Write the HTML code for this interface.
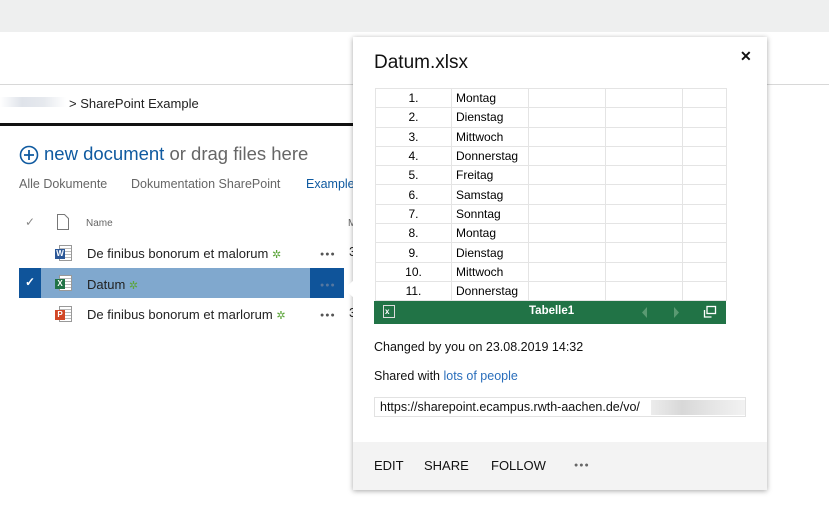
<!DOCTYPE html>
<html><head><meta charset="utf-8"><style>
*{margin:0;padding:0;box-sizing:border-box}
body{width:829px;height:529px;position:relative;overflow:hidden;background:#fff;font-family:"Liberation Sans",Arial,sans-serif;color:#222}
.a{position:absolute;white-space:nowrap}
.ic{position:absolute;width:13px;height:16px;border:1px solid #999;background:repeating-linear-gradient(180deg,#fff 0 2px,#bbb 2px 3px)}
.ic b{position:absolute;left:-5px;top:3px;width:10px;height:10px;color:#fff;font-size:8px;font-weight:bold;text-align:center;line-height:10px}
.star{color:#5ca53b;font-size:11px}
.dots{color:#555;font-size:7px;letter-spacing:1px}
table{border-collapse:collapse;position:absolute;left:375px;top:88px;font-family:"Liberation Sans",sans-serif;font-size:12px;color:#000}
td{border:1px solid #e4e4e4;height:19.3px;padding:0 4px}
</style></head><body>
<div class="a" style="left:0;top:0;width:829px;height:32px;background:#eeefef"></div>
<div class="a" style="left:0;top:84px;width:829px;height:1px;background:#d8d8d8"></div>
<div class="a" style="left:0;top:97px;width:66px;height:10px;background:linear-gradient(90deg,#fff,#dfe3ea,#e6e9ee,#fff)"></div>
<div class="a" style="left:69px;top:96px;font-size:13px;color:#222">&gt; SharePoint Example</div>
<div class="a" style="left:0;top:123px;width:353px;height:3px;background:#111"></div>
<svg class="a" style="left:19px;top:145px" width="20" height="20"><circle cx="10" cy="10" r="8.5" fill="none" stroke="#0f5aa0" stroke-width="1.6"/><path d="M10 5v10M5 10h10" stroke="#0f5aa0" stroke-width="1.8"/></svg>
<div class="a" style="left:44px;top:143px;font-size:18.5px;color:#0f5aa0">new document <span style="color:#666">or drag files here</span></div>
<div class="a" style="left:19px;top:177px;font-size:12.5px;color:#666">Alle Dokumente</div>
<div class="a" style="left:131px;top:177px;font-size:12.5px;color:#666">Dokumentation SharePoint</div>
<div class="a" style="left:306px;top:177px;font-size:12.5px;color:#0f5aa0">Example</div>
<div class="a" style="left:25px;top:215px;font-size:12px;color:#888">✓</div>
<svg class="a" style="left:57px;top:214px" width="12" height="16"><path d="M0.5 0.5h7l4 4v11h-11z" fill="none" stroke="#777"/></svg>
<div class="a" style="left:86px;top:218px;font-size:10px;color:#666">Name</div>
<div class="a" style="left:348px;top:218px;font-size:10px;color:#666">M</div>

<div class="ic" style="left:59px;top:245px"><b style="background:#2b5797">W</b></div>
<div class="a" style="left:87px;top:246px;font-size:13px">De finibus bonorum et malorum <span class="star">✲</span></div>
<div class="a dots" style="left:320px;top:251px">●●●</div>
<div class="a" style="left:349px;top:244px;font-size:13px">3</div>

<div class="a" style="left:19px;top:268px;width:22px;height:30px;background:#0f549a"></div>
<div class="a" style="left:41px;top:268px;width:269px;height:30px;background:#80a8ce"></div>
<div class="a" style="left:310px;top:268px;width:34px;height:30px;background:#0f549a"></div>
<div class="a" style="left:25px;top:275px;color:#fff;font-size:12px;font-weight:bold">✓</div>
<div class="ic" style="left:59px;top:275px"><b style="background:#217346">X</b></div>
<div class="a" style="left:87px;top:277px;font-size:13px">Datum <span class="star">✲</span></div>
<div class="a dots" style="left:320px;top:282px;color:#5577a0">●●●</div>

<div class="ic" style="left:59px;top:306px"><b style="background:#d24726">P</b></div>
<div class="a" style="left:87px;top:307px;font-size:13px">De finibus bonorum et marlorum <span class="star">✲</span></div>
<div class="a dots" style="left:320px;top:312px">●●●</div>
<div class="a" style="left:349px;top:305px;font-size:13px">3</div>

<!-- popup -->
<div class="a" style="left:353px;top:37px;width:414px;height:453px;background:#fff;box-shadow:0 1px 5px rgba(0,0,0,.35)"></div>
<div class="a" style="left:344px;top:280px;width:0;height:0;border-top:9px solid transparent;border-bottom:9px solid transparent;border-right:10px solid #fff"></div>
<div class="a" style="left:374px;top:52px;font-size:19px;color:#111">Datum.xlsx</div>
<div class="a" style="left:740px;top:48px;font-size:14px;font-weight:bold;color:#111">✕</div>
<table>
<tr><td style="width:76px;text-align:center">1.</td><td style="width:77px">Montag</td><td style="width:77px"></td><td style="width:77px"></td><td style="width:44px"></td></tr>
<tr><td align="center">2.</td><td>Dienstag</td><td></td><td></td><td></td></tr>
<tr><td align="center">3.</td><td>Mittwoch</td><td></td><td></td><td></td></tr>
<tr><td align="center">4.</td><td>Donnerstag</td><td></td><td></td><td></td></tr>
<tr><td align="center">5.</td><td>Freitag</td><td></td><td></td><td></td></tr>
<tr><td align="center">6.</td><td>Samstag</td><td></td><td></td><td></td></tr>
<tr><td align="center">7.</td><td>Sonntag</td><td></td><td></td><td></td></tr>
<tr><td align="center">8.</td><td>Montag</td><td></td><td></td><td></td></tr>
<tr><td align="center">9.</td><td>Dienstag</td><td></td><td></td><td></td></tr>
<tr><td align="center">10.</td><td>Mittwoch</td><td></td><td></td><td></td></tr>
<tr><td align="center">11.</td><td>Donnerstag</td><td></td><td></td><td></td></tr>
</table>
<div class="a" style="left:374px;top:301px;width:352px;height:23px;background:#217346"></div>
<div class="a" style="left:383px;top:305px;width:12px;height:13px;border:1px solid #ddd;color:#fff;font-size:8px;font-weight:bold;line-height:11px;padding-left:1px">x</div>
<div class="a" style="left:529px;top:305px;color:#fff;font-size:11.5px;font-weight:bold">Tabelle1</div>
<svg class="a" style="left:640px;top:306px" width="50" height="13"><path d="M7 1l-5 5.5 5 5.5z" fill="#5a9a72"/><path d="M34 1l5 5.5-5 5.5z" fill="#5a9a72"/></svg>
<svg class="a" style="left:703px;top:305px" width="14" height="14"><rect x="4" y="1.5" width="8.5" height="7" fill="none" stroke="#fff" stroke-width="1.3"/><path d="M1.5 5v7h7" fill="none" stroke="#fff" stroke-width="1.3"/></svg>
<div class="a" style="left:374px;top:340px;font-size:12.5px;color:#111">Changed by you on 23.08.2019 14:32</div>
<div class="a" style="left:374px;top:369px;font-size:12.5px;color:#111">Shared with <span style="color:#2a6ebb">lots of people</span></div>
<div class="a" style="left:374px;top:397px;width:372px;height:20px;border:1px solid #e2e2e2"></div>
<div class="a" style="left:380px;top:400px;font-size:12.5px;color:#111">https://sharepoint.ecampus.rwth-aachen.de/vo/</div>
<div class="a" style="left:651px;top:400px;width:94px;height:15px;background:linear-gradient(90deg,#ececec,#d8d8d8,#e6e6e6,#f2f2f2)"></div>
<div class="a" style="left:353px;top:442px;width:414px;height:48px;background:#f3f3f3"></div>
<div class="a" style="left:374px;top:458px;font-size:13px;color:#111">EDIT</div>
<div class="a" style="left:424px;top:458px;font-size:13px;color:#111">SHARE</div>
<div class="a" style="left:491px;top:458px;font-size:13px;color:#111">FOLLOW</div>
<div class="a dots" style="left:574px;top:462px;color:#666">●●●</div>
</body></html>
